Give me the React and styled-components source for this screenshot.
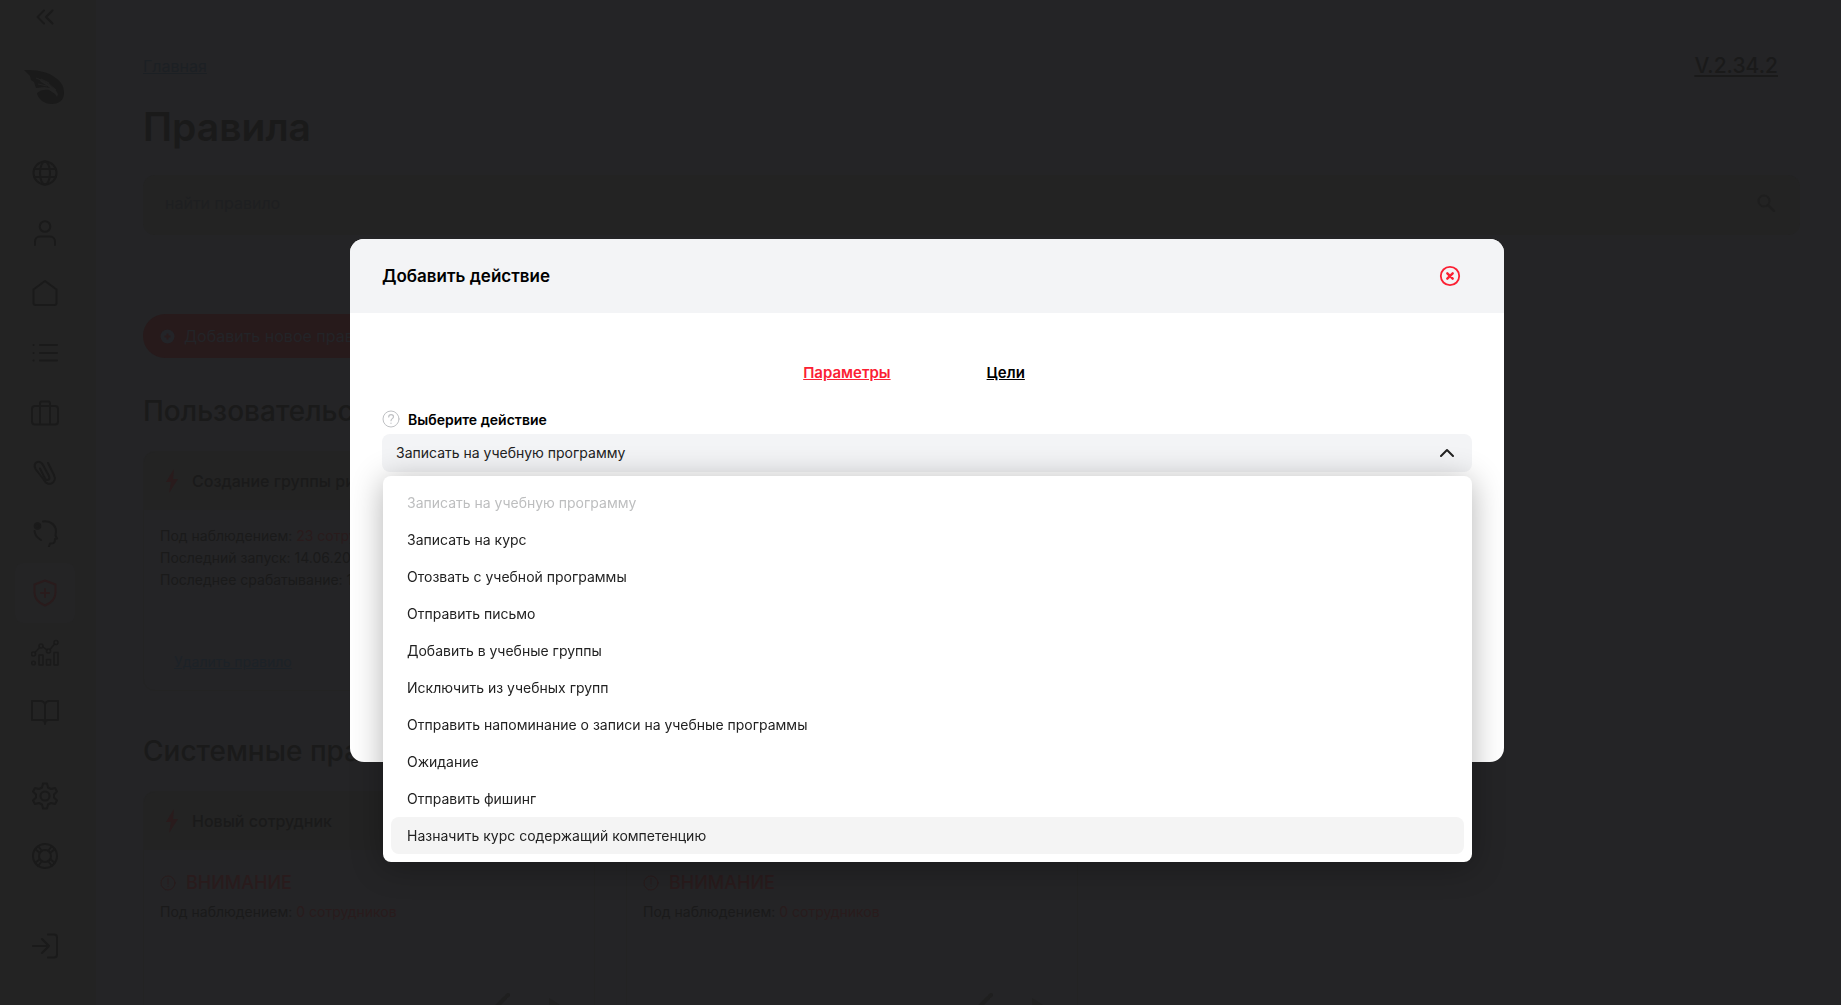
import React, { useState } from "react";
import styled, { createGlobalStyle } from "styled-components";

const color = {
  rail: "#232323",
  page: "#242426",
  panel: "#232323",
  ink: "#1a1a1a",
  dim: "#1e1f21",
  faint: "#1c2024",
  link: "#1c2228",
  red: "#291b1c",
  accent: "#fb2033",
  field: "#f3f4f6",
};

const GlobalStyle = createGlobalStyle`
  *, *::before, *::after { box-sizing: border-box; }
  body {
    margin: 0;
    background: ${color.page};
    color: ${color.ink};
    font-family: Inter, "Noto Sans", sans-serif;
    font-size: 14px;
  }
  button, input, select { font: inherit; color: inherit; }
  h1, h2, h3, p, ul { margin: 0; padding: 0; }
`;

const Shell = styled.div`
  display: flex;
  height: 100vh;
  overflow: hidden;
`;

const Rail = styled.nav`
  flex: 0 0 96px;
  display: flex;
  flex-direction: column;
  align-items: flex-start;
  padding-left: 15px;
  background: ${color.rail};
`;

const RailButton = styled.button`
  display: grid;
  place-items: center;
  flex: none;
  width: 60px;
  height: 60px;
  margin-top: ${(p) => p.$space || 0}px;
  padding: 0;
  border: 0;
  border-radius: 8px;
  background: ${(p) => (p.$active ? "#242425" : "transparent")};
  color: ${(p) => (p.$active ? color.red : color.ink)};
`;

const CollapseButton = styled(RailButton)`
  height: 34px;
`;

const Main = styled.main`
  flex: 1;
  min-width: 0;
  padding: 54px 41px 0 47px;
`;

const TopLine = styled.div`
  display: flex;
  justify-content: space-between;
  padding-right: 22px;
  line-height: 24px;
`;

const Crumb = styled.a`
  color: ${color.faint};
  font-size: 16px;
`;

const Version = styled.a`
  color: ${color.ink};
  font-size: 21px;
  font-weight: 500;
`;

const PageTitle = styled.h1`
  margin-top: 25px;
  font-size: 39px;
  line-height: 48px;
  font-weight: 600;
`;

const SearchBar = styled.label`
  display: flex;
  align-items: center;
  height: 60px;
  margin-top: 24px;
  padding: 0 24px 4px 22px;
  border-radius: 12px;
  background: ${color.rail};
  color: #1e1e1e;
`;

const SearchInput = styled.input`
  flex: 1;
  height: 40px;
  padding: 0;
  border: 0;
  outline: 0;
  background: transparent;
  font-size: 16px;
  &::placeholder { color: ${color.dim}; opacity: 1; }
`;

const AddButton = styled.button`
  display: flex;
  align-items: center;
  gap: 9px;
  height: 44px;
  margin-top: 79px;
  padding: 0 24px 0 17px;
  border: 0;
  border-radius: 22px;
  background: #271a1b;
  color: #232428;
  font-size: 16px;
`;

const SectionTitle = styled.h2`
  margin-top: ${(p) => p.$space}px;
  font-size: 28px;
  line-height: 36px;
  font-weight: 500;
`;

const Cards = styled.div`
  display: grid;
  grid-template-columns: repeat(auto-fill, 452px);
  gap: 31px;
  margin-top: 22px;
`;

const Card = styled.article`
  display: flex;
  flex-direction: column;
  height: ${(p) => p.$height}px;
  border: 1px solid ${color.panel};
  border-radius: 12px;
  overflow: hidden;
`;

const CardHead = styled.header`
  display: flex;
  align-items: center;
  gap: 12px;
  height: 58px;
  padding-left: 20px;
  background: ${color.rail};
`;

const CardTitle = styled.h3`
  font-size: 16px;
  font-weight: 500;
`;

const CardBody = styled.div`
  flex: 1;
  display: flex;
  flex-direction: column;
  padding: ${(p) => p.$top}px 16px 12px;
  line-height: 22px;
`;

const RedText = styled.span`
  color: ${color.red};
`;

const Warning = styled.p`
  display: flex;
  align-items: center;
  gap: 10px;
  margin-bottom: 7px;
  color: ${color.red};
  font-size: 18px;
  font-weight: 500;
`;

const DeleteLink = styled.a`
  margin: 60px 0 0 14px;
  color: ${color.link};
`;

const CardActions = styled.div`
  display: flex;
  justify-content: flex-end;
  align-items: center;
  gap: 34px;
  margin-top: 68px;
  padding-right: 16px;
  color: #1f1f1f;
`;

const IconButton = styled.button`
  display: grid;
  place-items: center;
  padding: 0;
  border: 0;
  background: transparent;
`;

const Overlay = styled.div`
  position: fixed;
  inset: 0;
  display: flex;
  align-items: flex-start;
  padding: 239px 337px 0 350px;
`;

const Dialog = styled.section`
  flex: 1;
  min-width: 0;
  min-height: 523px;
  border-radius: 14px;
  background: #fff;
  color: #000;
`;

const DialogHead = styled.header`
  display: flex;
  align-items: center;
  justify-content: space-between;
  height: 74px;
  padding: 0 43px 0 32px;
  border-radius: 14px 14px 0 0;
  background: #f3f4f6;
`;

const DialogTitle = styled.h2`
  font-size: 17px;
  font-weight: 600;
`;

const DialogBody = styled.div`
  padding: 46px 32px 0;
`;

const Tabs = styled.nav`
  display: flex;
  justify-content: center;
  gap: 96px;
  padding-right: 26px;
  line-height: 28px;
`;

const Tab = styled.a`
  color: ${(p) => (p.$active ? color.accent : "#000")};
  font-size: 15px;
  font-weight: 600;
`;

const FieldLabel = styled.label`
  display: flex;
  align-items: center;
  gap: 8px;
  height: 24px;
  margin: 20px 0 3px;
  font-weight: 600;
`;

const SelectWrap = styled.div`
  position: relative;
`;

const Select = styled.select`
  display: block;
  appearance: none;
  width: 100%;
  height: 38px;
  padding: 0 48px 2px 14px;
  border: 0;
  border-radius: 8px;
  outline: 0;
  background: ${color.field};
  color: #222;
`;

const SelectArrow = styled.span`
  position: absolute;
  top: 12px;
  right: 18px;
  display: flex;
  color: #222;
  pointer-events: none;
`;

const Menu = styled.ul`
  position: absolute;
  top: 42px;
  left: 1px;
  right: 0;
  padding: 8px;
  border-radius: 8px;
  background: #fff;
  box-shadow: 0 4px 32px rgba(0, 0, 0, 0.3);
  list-style: none;
`;

const MenuItem = styled.button`
  display: block;
  width: 100%;
  height: 37px;
  padding: 0 16px;
  border: 0;
  border-radius: 8px;
  background: ${(p) => (p.$hover ? "#f4f4f4" : "transparent")};
  color: ${(p) => (p.disabled ? "#bdbebf" : "#222")};
  text-align: left;
`;

const Svg = ({ size = 28, width = 2, view = 28, children }) => (
  <svg width={size} height={size} viewBox={`0 0 ${view} ${view}`} fill="none" stroke="currentColor"
    strokeWidth={width} strokeLinecap="round" strokeLinejoin="round" aria-hidden="true">
    {children}
  </svg>
);

const icons = {
  collapse: <Svg><path d="M13 7.500 6.500 14l6.500 6.500M21.500 7.500 15 14l6.500 6.500" /></Svg>,
  logo: (
    <svg width="44" height="36" viewBox="0 0 44 36" fill="currentColor" aria-hidden="true">
      <path d="M1 1C13 1 22 2 30 7c8 5 11 10 11 17 0 7-5 11-12 11-8 0-14-5-15-11 3-3 8-4 12-3l6 4 2 3 1-3-3-5-8-6-9-5 3 4 5 3 4 3-6-1-8 1-2-6-3-2-1-4z" />
      <path d="M13 9l12 5 8 7M18 10l8 4M15 15l9 2" fill="none" stroke={color.rail} strokeWidth="1" />
    </svg>
  ),
  globe: <Svg><circle cx="14" cy="14" r="11.5" /><ellipse cx="14" cy="14" rx="5" ry="11.5" /><path d="M3.5 10h21M3.5 18h21" /></Svg>,
  user: <Svg><circle cx="14" cy="7.5" r="5.3" /><path d="M4 26v-3.500a5 5 0 0 1 5-5h10a5 5 0 0 1 5 5V26" /></Svg>,
  home: <Svg><path d="M2.500 10.500 14 2l11.500 8.500V24a2 2 0 0 1-2 2h-19a2 2 0 0 1-2-2z" /></Svg>,
  list: <Svg><path d="M9 6h17M9 14h17M9 21.500h17M2.500 6h.1M2.500 14h.1M2.500 21.500h.1" /></Svg>,
  bag: <Svg><rect x="1" y="7" width="26" height="18.500" rx="3" /><path d="M9 25V4.500a2 2 0 0 1 2-2h6a2 2 0 0 1 2 2V25" /></Svg>,
  clip: <Svg><path d="m17 4 6 12c3.500 8-6.500 12.500-10 5L4.500 10C1.500 3 9 0 12 6l6 11c1.500 4-2.500 5.500-4 2.500L9 9.500" /></Svg>,
  head: <Svg><path d="M12 2.500c8-1 13 4 13 10l-.5 4 1.500 3-2 .5c0 4-1 4.500-5 4.500l-1 3M3.500 12c.5 4 3 7 6.500 9" /><circle cx="6.500" cy="7" r="2.800" fill="currentColor" /></Svg>,
  shield: <Svg><path d="m14 1.500 10.500 4v8c0 6.500-4.500 10.500-10.500 13C8 24 3.500 20 3.500 13.500v-8zM14 10v8M10 14h8" /></Svg>,
  chart: (
    <Svg width={1.500}>
      <circle cx="2.500" cy="15" r="2" /><circle cx="10" cy="7" r="2" /><circle cx="17.500" cy="12" r="2" /><circle cx="25" cy="3.500" r="2" />
      <path d="m4 13.500 4.500-5M12 8l4 3M19 10.500l4.500-5.500" />
      <circle cx="2.500" cy="24" r="1.800" /><rect x="8" y="16" width="4" height="10" /><rect x="15.500" y="20.500" width="4" height="5.500" /><rect x="23" y="13.500" width="4" height="12.500" />
    </Svg>
  ),
  book: <Svg><path d="M14 5c-1-2-2-3-4-3H1v19h10c2 0 3 1 3 4 0-3 1-4 3-4h10V2h-9c-2 0-3 1-4 3zv20" /></Svg>,
  gear: (
    <Svg>
      <circle cx="14" cy="14" r="4.500" />
      <path d="M12 1.500h4l1 4 3 1.500 4-1 2 3.500-3 3v3l3 3-2 3.500-4-1-3 1.500-1 4h-4l-1-4-3-1.500-4 1-2-3.500 3-3v-3l-3-3L4 6l4 1 3-1.500z" />
    </Svg>
  ),
  help: (
    <Svg>
      <circle cx="14" cy="14" r="12" /><circle cx="14" cy="14" r="6" />
      <path d="m4.500 7.500 4 3M7.500 4.500l3 4M23.500 7.500l-4 3M20.500 4.500l-3 4M4.500 20.500l4-3M7.500 23.500l3-4M23.500 20.500l-4-3M20.500 23.500l-3-4" />
    </Svg>
  ),
  exit: <Svg><path d="M2 14h16M11 7l7 7-7 7M17 2.500h6a3 3 0 0 1 3 3v17a3 3 0 0 1-3 3h-6" /></Svg>,
};

const railItems = [
  ["logo", "Логотип", 23],
  ["globe", "Портал", 26],
  ["user", "Профиль"],
  ["home", "Главная"],
  ["list", "Список"],
  ["bag", "Курсы"],
  ["clip", "Вложения"],
  ["head", "Сотрудники"],
  ["shield", "Правила"],
  ["chart", "Отчёты"],
  ["book", "Справочник"],
  ["gear", "Настройки", 23],
  ["help", "Помощь"],
  ["exit", "Выход", 30],
];

const actions = [
  "Записать на учебную программу",
  "Записать на курс",
  "Отозвать с учебной программы",
  "Отправить письмо",
  "Добавить в учебные группы",
  "Исключить из учебных групп",
  "Отправить напоминание о записи на учебные программы",
  "Ожидание",
  "Отправить фишинг",
  "Назначить курс содержащий компетенцию",
];

const Bolt = () => (
  <svg width="16" height="24" viewBox="0 0 16 24" fill={color.red} aria-hidden="true">
    <path d="M10 0 2 13h5l-2 11 9-14H9z" />
  </svg>
);

function SystemCard({ title }) {
  return (
    <Card $height={260}>
      <CardHead><Bolt /><CardTitle>{title}</CardTitle></CardHead>
      <CardBody $top={22}>
        <Warning>
          <Svg size={16} view={16} width={1}><circle cx="8" cy="8" r="7" /><path d="M8 4v5M8 11.500v.1" /></Svg>
          ВНИМАНИЕ
        </Warning>
        <p>Под наблюдением: <RedText>0 сотрудников</RedText></p>
        <CardActions>
          <IconButton aria-label="Изменить">
            <Svg size={24} view={24} width={4}><path d="m4 20 13-13M19 5l1-1" /></Svg>
          </IconButton>
          <IconButton aria-label="Запустить">
            <svg width="16" height="16" viewBox="0 0 16 16" fill="#212121" aria-hidden="true"><path d="m3 3 11 7-11 7z" /></svg>
          </IconButton>
        </CardActions>
      </CardBody>
    </Card>
  );
}

function ActionSelect() {
  const [value, setValue] = useState(actions[0]);
  const [open, setOpen] = useState(true);
  const [hover, setHover] = useState(actions[actions.length - 1]);
  return (
    <SelectWrap>
      <Select
        id="action"
        value={value}
        onChange={(e) => setValue(e.target.value)}
        onMouseDown={(e) => { e.preventDefault(); setOpen(!open); }}
      >
        {actions.map((a) => <option key={a}>{a}</option>)}
      </Select>
      <SelectArrow>
        <Svg size={14} view={14} width={2}><path d="M1 10 7 4l6 6" /></Svg>
      </SelectArrow>
      {open && (
        <Menu>
          {actions.map((a) => (
            <li key={a}>
              <MenuItem
                type="button"
                disabled={a === value}
                $hover={a === hover}
                onMouseEnter={() => setHover(a)}
                onClick={() => { setValue(a); setOpen(false); }}
              >
                {a}
              </MenuItem>
            </li>
          ))}
        </Menu>
      )}
    </SelectWrap>
  );
}

export default function App() {
  return (
    <>
      <GlobalStyle />
      <Shell>
        <Rail>
          <CollapseButton aria-label="Свернуть">{icons.collapse}</CollapseButton>
          {railItems.map(([name, label, space]) => (
            <RailButton key={name} aria-label={label} $space={space} $active={name === "shield"}>
              {icons[name]}
            </RailButton>
          ))}
        </Rail>
        <Main>
          <TopLine>
            <Crumb href="#main">Главная</Crumb>
            <Version href="#version">V.2.34.2</Version>
          </TopLine>
          <PageTitle>Правила</PageTitle>
          <SearchBar>
            <SearchInput type="search" placeholder="найти правило" aria-label="найти правило" />
            <Svg size={20} view={20} width={2}><circle cx="8" cy="8" r="5.500" /><path d="m12 12 6 6" /></Svg>
          </SearchBar>
          <AddButton>
            <svg width="15" height="15" viewBox="0 0 15 15" aria-hidden="true">
              <circle cx="7.500" cy="7.500" r="7" fill="currentColor" />
              <path d="M7.500 4.500v6M4.500 7.500h6" stroke={color.red} strokeWidth="2" />
            </svg>
            Добавить новое правило
          </AddButton>
          <SectionTitle $space={35}>Пользовательские правила</SectionTitle>
          <Cards>
            <Card $height={240}>
              <CardHead><Bolt /><CardTitle>Создание группы риска</CardTitle></CardHead>
              <CardBody $top={15}>
                <p>Под наблюдением: <RedText>23 сотрудника</RedText></p>
                <p>Последний запуск: 14.06.2024</p>
                <p>Последнее срабатывание: 14.06.2024</p>
                <DeleteLink href="#delete">Удалить правило</DeleteLink>
              </CardBody>
            </Card>
          </Cards>
          <SectionTitle $space={42}>Системные правила</SectionTitle>
          <Cards>
            <SystemCard title="Новый сотрудник" />
            <SystemCard title="Новый сотрудник" />
          </Cards>
        </Main>
      </Shell>
      <Overlay>
        <Dialog role="dialog" aria-labelledby="dialog-title">
          <DialogHead>
            <DialogTitle id="dialog-title">Добавить действие</DialogTitle>
            <IconButton aria-label="Закрыть">
              <svg width="22" height="22" viewBox="0 0 22 22" fill="none" stroke={color.accent} aria-hidden="true">
                <circle cx="11" cy="11" r="9.200" strokeWidth="1.800" />
                <path d="m8.300 8.300 5.400 5.400M13.700 8.300l-5.400 5.400" strokeWidth="2.400" strokeLinecap="round" />
              </svg>
            </IconButton>
          </DialogHead>
          <DialogBody>
            <Tabs>
              <Tab href="#params" $active>Параметры</Tab>
              <Tab href="#targets">Цели</Tab>
            </Tabs>
            <FieldLabel htmlFor="action">
              <svg width="18" height="18" viewBox="0 0 18 18" fill="none" stroke="#bfc1c4" strokeLinecap="round" aria-hidden="true">
                <circle cx="9" cy="9" r="8" />
                <path d="M6.700 7c0-3.200 4.800-3 4.800-.2C11.500 8.700 9 8.600 9 10.700M9 13.200v.1" strokeWidth="1.200" />
              </svg>
              Выберите действие
            </FieldLabel>
            <ActionSelect />
          </DialogBody>
        </Dialog>
      </Overlay>
    </>
  );
}
